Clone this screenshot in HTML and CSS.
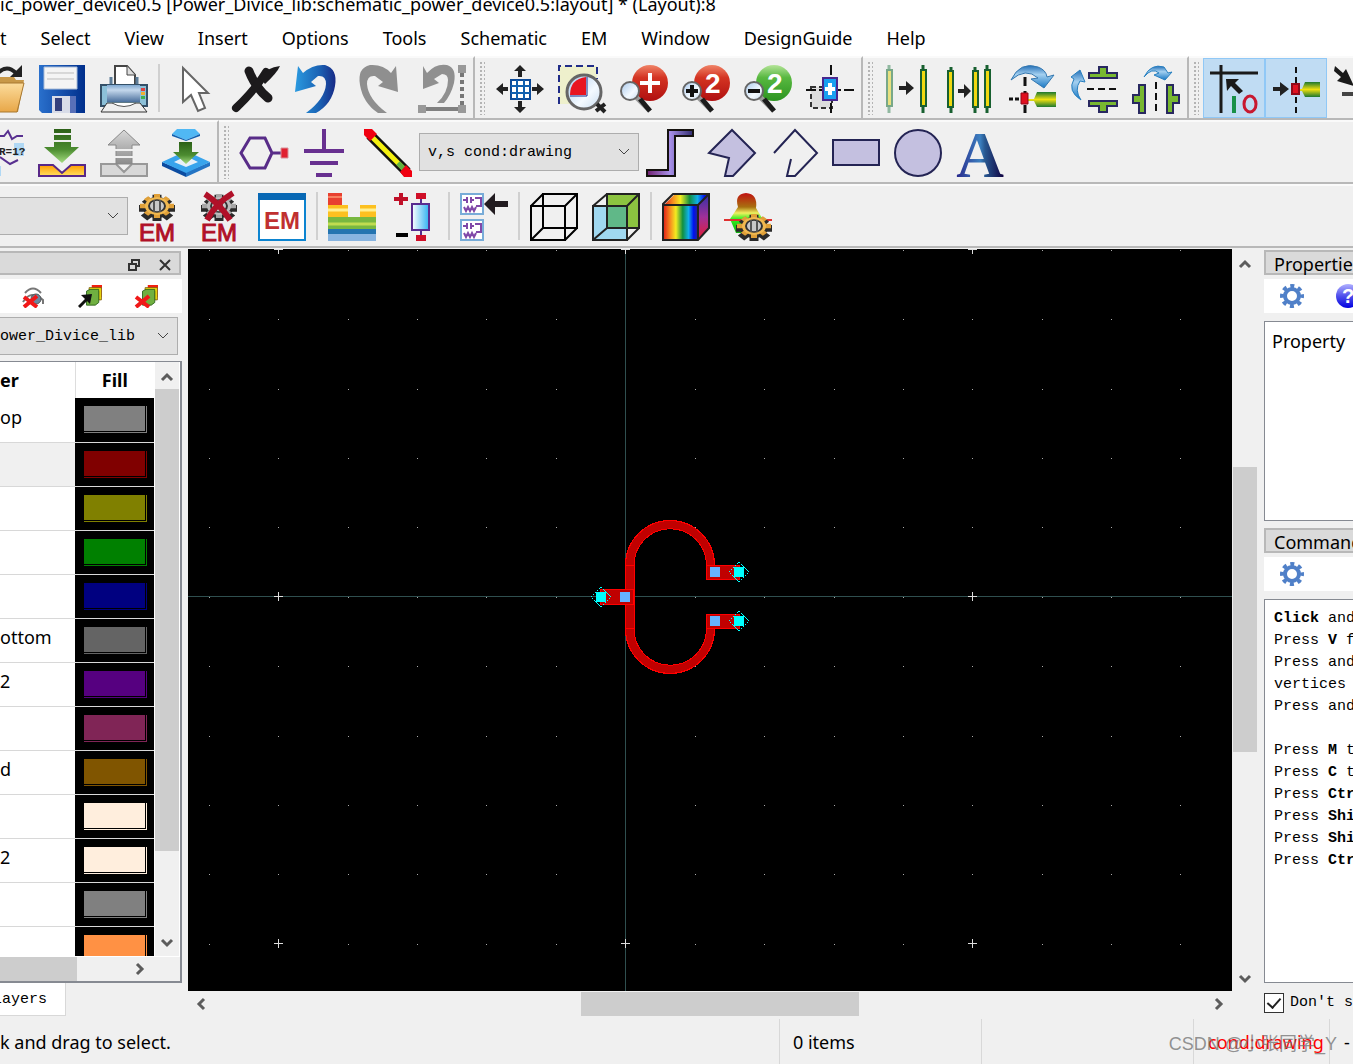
FILE: index.html
```html
<!DOCTYPE html>
<html lang="en">
  <head>
    <meta charset="utf-8" />
    <meta name="viewport" content="width=device-width, initial-scale=1" />
    <title>Layout</title>
    <link rel="stylesheet" href="styles.css">
  </head>

  <body>
    <svg class="defs" aria-hidden="true">
      <defs>
        <linearGradient id="folder" x2="0" y2="1"><stop stop-color="#fcdc9c"/><stop offset="1" stop-color="#e8a748"/></linearGradient>
        <linearGradient id="blue" x2="1"><stop stop-color="#2a9ae0"/><stop offset=".6" stop-color="#1a62b4"/><stop offset="1" stop-color="#182a86"/></linearGradient>
        <linearGradient id="disk" x2="1"><stop stop-color="#2a70cc"/><stop offset="1" stop-color="#002f8c"/></linearGradient>
        <linearGradient id="print" x2="0" y2="1"><stop stop-color="#7fa8d0"/><stop offset=".3" stop-color="#c4d8ec"/><stop offset="1" stop-color="#4a6f9c"/></linearGradient>
        <linearGradient id="red" x2="0" y2="1"><stop stop-color="#f08468"/><stop offset=".35" stop-color="#d43422"/><stop offset="1" stop-color="#b01010"/></linearGradient>
        <linearGradient id="green" x2="0" y2="1"><stop stop-color="#b4e498"/><stop offset=".35" stop-color="#58b840"/><stop offset="1" stop-color="#2c9420"/></linearGradient>
        <linearGradient id="glass" x2="1" y2="1"><stop stop-color="#a8c8ec"/><stop offset=".6" stop-color="#f4faff"/><stop offset="1" stop-color="#c8dcf0"/></linearGradient>
        <linearGradient id="sky" x2="0" y2="1"><stop stop-color="#2470b8"/><stop offset=".4" stop-color="#a4d0f0"/><stop offset="1" stop-color="#1878c4"/></linearGradient>
        <linearGradient id="port" x2="0" y2="1"><stop stop-color="#1c7830"/><stop offset=".5" stop-color="#f0e010"/><stop offset="1" stop-color="#1c7830"/></linearGradient>
        <linearGradient id="down" x2="0" y2="1"><stop stop-color="#2c6018"/><stop offset=".6" stop-color="#4c8c30"/><stop offset="1" stop-color="#a4dc80"/></linearGradient>
        <linearGradient id="up" x2="0" y2="1"><stop stop-color="#d8d8d8"/><stop offset="1" stop-color="#8c8c8c"/></linearGradient>
        <linearGradient id="tray" x2="0" y2="1"><stop stop-color="#ff9c00"/><stop offset="1" stop-color="#ffe060"/></linearGradient>
        <linearGradient id="letter" x2="1"><stop stop-color="#28288c"/><stop offset=".5" stop-color="#3c80c0"/><stop offset=".6" stop-color="#285890"/><stop offset="1" stop-color="#100040"/></linearGradient>
        <linearGradient id="trace" x2="1"><stop stop-color="#702070"/><stop offset=".5" stop-color="#a890e8"/><stop offset="1" stop-color="#302c70"/></linearGradient>
        <linearGradient id="rainbow" x2="1"><stop stop-color="#e01818"/><stop offset=".22" stop-color="#f89020"/><stop offset=".38" stop-color="#f4ec20"/><stop offset=".58" stop-color="#109040"/><stop offset=".75" stop-color="#10b0e8"/><stop offset=".9" stop-color="#0010f0"/><stop offset="1" stop-color="#2020a0"/></linearGradient>
        <linearGradient id="side" x2="0" y2="1"><stop stop-color="#3030a8"/><stop offset=".5" stop-color="#a03098"/><stop offset="1" stop-color="#e81c30"/></linearGradient>
        <linearGradient id="lobe" x2="0" y2="1"><stop stop-color="#c01010"/><stop offset=".35" stop-color="#a87010"/><stop offset=".5" stop-color="#f0f060"/><stop offset=".65" stop-color="#30f020"/><stop offset="1" stop-color="#10b010"/></linearGradient>
        <linearGradient id="ball" x2="0" y2="1"><stop stop-color="#b0b0ff"/><stop offset=".5" stop-color="#5050ec"/><stop offset="1" stop-color="#0000e0"/></linearGradient>
        <linearGradient id="tube" x2="1"><stop stop-color="#fff"/><stop offset="1" stop-color="#30b0f0"/></linearGradient>
        <symbol id="gear" viewBox="0 0 24 24">
          <g fill="none" stroke="currentColor">
            <circle cx="12" cy="12" r="7" stroke-width="4"/>
            <circle cx="12" cy="12" r="10" stroke-width="4" stroke-dasharray="4 3.85" stroke-dashoffset="2"/>
          </g>
        </symbol>
        <symbol id="cog" viewBox="0 0 38 28">
          <g transform="translate(19 13) scale(1 .75)">
            <path d="M0-15v35M-18 3h36M-12-9l25 25M12-9l-25 25" stroke="#2a2a2a" stroke-width="9"/>
            <circle r="14" cy="2" fill="#2a2a2a"/>
            <path d="M0-16v32M-17 0h34M-11-11l22 22M11-11l-22 22" stroke="#e0a038" stroke-width="6"/>
            <circle r="12" fill="#f0b850"/>
            <circle r="8" fill="#c8c8c8" stroke="#333" stroke-width="2"/>
            <path d="M-3-8v16M3-8v16" stroke="#555" stroke-width="2"/>
          </g>
        </symbol>
        <symbol id="lens" viewBox="0 0 48 48">
          <path d="M16 32l14 14" stroke="#999" stroke-width="5"/>
          <path d="M20 34l10 12" stroke="#1c1c1c" stroke-width="5"/>
          <circle cx="10" cy="26" r="9" fill="url(#glass)" stroke="#666" stroke-width="2"/>
        </symbol>
        <symbol id="stack" viewBox="0 0 24 24">
          <path d="M10 0h14v14h-3V4H10z" fill="#f02010"/>
          <path d="M7 3h14v14h-3V7H7z" fill="#f0e010" stroke="#806010"/>
          <path d="M4 7l4-2h10v15l-4 3H4z" fill="#70b040" stroke="#286018"/>
        </symbol>
        <symbol id="schem" viewBox="0 0 24 22">
          <path d="M1 1h22v20H1z" fill="#fff" stroke="#78acd8" stroke-width="2"/>
          <path d="M3 7h4M7 4v6M11 4v6M11 7h3M15 5h6v8h-5" fill="none" stroke="#8048a8" stroke-width="2"/>
          <path d="M4 14l2 4 2-4 2 4 2-4 2 4 2-4" fill="none" stroke="#8048a8" stroke-width="2"/>
        </symbol>
        <symbol id="cut" viewBox="0 0 24 24"><path d="M2 13l13 10M15 12L2 23" stroke="#f01818" stroke-width="4"/></symbol>
      </defs>
    </svg>

    <header class="title">ic_power_device0.5 [Power_Divice_lib:schematic_power_device0.5:layout] * (Layout):8</header>

    <nav class="menu">
      <a href="#">t</a>
      <a href="#">Select</a>
      <a href="#">View</a>
      <a href="#">Insert</a>
      <a href="#">Options</a>
      <a href="#">Tools</a>
      <a href="#">Schematic</a>
      <a href="#">EM</a>
      <a href="#">Window</a>
      <a href="#">DesignGuide</a>
      <a href="#">Help</a>
    </nav>

    <!-- file, edit, zoom -->
    <div class="row">
      <div class="bar clipped">
        <button class="tool" aria-label="Open"><svg viewBox="0 0 48 48"><path d="M2 12h36l2 3h8l-6 32H4z" fill="#c89848"/><path d="M2 18h46l-7 29H4z" fill="url(#folder)" stroke="#a87830"/><path d="M22 8q9-9 18 0" fill="none" stroke="#222" stroke-width="4"/><path d="M46 0v12H34z" fill="#222"/></svg></button>
        <button class="tool" aria-label="Save"><svg viewBox="0 0 48 48"><path d="M1 0h46v48H4l-3-3z" fill="url(#disk)"/><path d="M6 2h33v22H6z" fill="#f4f4f4" stroke="#a8bcd8"/><path d="M9 8h27M9 14h27" stroke="#bbb"/><path d="M14 31h24v17H14z" fill="#d8dce8"/><path d="M17 33h7v13h-7z" fill="#34407c"/><path d="M32 31h6v17h-6z" fill="#5870b8"/></svg></button>
        <button class="tool" aria-label="Print"><svg viewBox="0 0 48 48"><path d="M15 22V1h12l8 9v12" fill="#fff" stroke="#444" stroke-width="2"/><path d="M27 1v9h8" fill="#ddd" stroke="#444"/><path d="M11 12v9m26-9v9" stroke="#5c7c98" stroke-width="3"/><path d="M1 20h46v21H1z" fill="#8cc0d8" stroke="#345068" stroke-width="2"/><path d="M7 20h33v17H7z" fill="url(#print)"/><path d="M7 38h33l7 9H1z" fill="#eee" stroke="#333"/><path d="M12 38q12 7 24 0" fill="#fff" stroke="#555"/><path d="M41 23h4v3h-4z" fill="#e04040"/><path d="M41 27h4v3h-4z" fill="#f0b030"/><path d="M41 31h4v3h-4z" fill="#40b050"/></svg></button>
        <span class="sep"></span>
        <button class="tool" aria-label="Pointer"><svg viewBox="0 0 48 48"><path d="M13 3v34l8-7 7 16 7-3-6-15h9z" fill="#fff" stroke="#666" stroke-width="2"/></svg></button>
        <button class="tool" aria-label="Delete"><svg viewBox="0 0 48 48"><path d="M17 6q6 16 19 27" fill="none" stroke="#1c1a1c" stroke-width="9" stroke-linecap="round"/><path d="M4 43Q23 25 34 7" fill="none" stroke="#1c1a1c" stroke-width="8" stroke-linecap="round"/><path d="M28 13Q35 2 48 1q-3 7-15 18z" fill="#1c1a1c"/></svg></button>
        <button class="tool" aria-label="Undo"><svg viewBox="0 0 48 48"><path d="M4 1l5 7Q19-1 31 0q13 4 10 21-3 18-19 27H12q19-14 20-29 0-9-8-8l-7 6 5 4L1 27z" fill="url(#blue)"/></svg></button>
        <button class="tool" aria-label="Redo"><svg viewBox="0 0 48 48"><path d="M40 1l-5 7Q27-1 14 0 1 3 4 20q3 18 18 28h9Q12 34 11 19q0-9 8-8l8 6-5 4 20 6z" fill="#8f8f8f"/></svg></button>
        <button class="tool" aria-label="Undo segment"><svg viewBox="0 0 48 48"><path d="M5 1l4 7Q18-2 29 0q10 3 7 18-3 12-10 20h-7q11-10 11-23 0-6-6-6l-8 5 5 4L5 24z" fill="#909090"/><path d="M5 44h35" stroke="#808080" stroke-width="4"/><path d="M44 8v32" stroke="#777" stroke-width="4" stroke-dasharray="4 3"/><path d="M0 40h8v8H0zM40 40h8v8h-8zM40 0h8v8h-8z" fill="#999"/></svg></button>
      </div>
      <div class="bar">
        <span class="grip"></span>
        <button class="tool" aria-label="View all"><svg viewBox="0 0 48 48"><path d="M24 0l6 6h-4v6h-4V6h-4zM24 48l6-6h-4v-6h-4v6h-4zM0 24l7-6v4h5v4H7v4zM48 24l-7-6v4h-5v4h5v4z" fill="#222"/><path d="M15 15h19v19H15z" fill="#fff" stroke="#0c4a98" stroke-width="2"/><path d="M21 15v19M28 15v19M15 21h19M15 28h19" stroke="#1060b0" stroke-width="2"/></svg></button>
        <button class="tool" aria-label="Zoom to area"><svg viewBox="0 0 48 48"><path d="M1 1h38v38H1z" fill="#eef0cc"/><path d="M1 39V1h38v13" fill="none" stroke="#202c88" stroke-width="2" stroke-dasharray="7 4"/><circle cx="26" cy="27" r="17" fill="url(#glass)" stroke="#666" stroke-width="3"/><path d="M28 12v18H12Q12 14 28 12z" fill="#e81420"/><path d="M29 12v19M12 31h17" stroke="#182888" stroke-width="1"/><path d="M39 39l8 8M38 46l9-7" stroke="#222" stroke-width="4"/></svg></button>
        <button class="tool" aria-label="Zoom in"><svg viewBox="0 0 48 48"><circle cx="30" cy="18" r="18" fill="url(#red)"/><path d="M28 8h4v8h8v4h-8v8h-4v-8h-8v-4h8z" fill="#fff"/><use href="#lens"/></svg></button>
        <button class="tool" aria-label="Zoom in by 2"><svg viewBox="0 0 48 48"><circle cx="30" cy="18" r="18" fill="url(#red)"/><text class="two" x="23" y="28">2</text><use href="#lens"/><path d="M10 20v12M4 26h12" stroke="#111" stroke-width="4"/></svg></button>
        <button class="tool" aria-label="Zoom out by 2"><svg viewBox="0 0 48 48"><circle cx="30" cy="18" r="18" fill="url(#green)"/><text class="two" x="23" y="28">2</text><use href="#lens"/><path d="M4 26h12" stroke="#111" stroke-width="4"/></svg></button>
        <button class="tool" aria-label="Center view"><svg viewBox="0 0 48 48"><path d="M5 22h21v21H5z" fill="#ddd" stroke="#333" stroke-width="2" stroke-dasharray="5 3"/><path d="M25 0v48M0 25h48" stroke="#111" stroke-width="2" stroke-dasharray="10 3 3 3"/><path d="M17 13h14v22H17z" fill="#18a0f0" stroke="#482890" stroke-width="2"/><path d="M24 18v12M19 24h10" stroke="#fff" stroke-width="4"/></svg></button>
      </div>
      <div class="bar">
        <span class="grip"></span>
        <button class="tool" aria-label="Move"><svg viewBox="0 0 48 48"><path d="M5 0v48" stroke="#90b8a0" stroke-width="3"/><path d="M3 5h5v36H3z" fill="#e8e080" stroke="#78a888" stroke-width="2"/><path d="M39 0v48" stroke="#186030" stroke-width="3"/><path d="M37 5h5v36h-5z" fill="#f0d810" stroke="#186030" stroke-width="2"/><path d="M15 21h7v-5l8 7-8 7v-5h-7z" fill="#222"/></svg></button>
        <button class="tool" aria-label="Copy"><svg viewBox="0 0 48 48"><path d="M5 2v46M29 2v46M41 0v48" stroke="#186030" stroke-width="3"/><path d="M2 6h5v36H2zM27 6h5v36h-5zM39 5h5v37h-5z" fill="#f0d810" stroke="#186030" stroke-width="2"/><path d="M12 24h6v-5l7 7-7 7v-5h-6z" fill="#222"/></svg></button>
        <button class="tool" aria-label="Rotate"><svg viewBox="0 0 48 48"><path d="M3 15Q12-4 30 2q8 3 9 10l7-2-10 13-13-9 7-1Q18 2 3 15z" fill="url(#sky)" stroke="#3478b0"/><path d="M17 12v36" stroke="#111" stroke-width="3" stroke-dasharray="9 5"/><path d="M1 34h10" stroke="#111" stroke-width="3" stroke-dasharray="4 2"/><path d="M20 34h6l3-7h19v15H29l-3-6h-6z" fill="url(#port)"/><path d="M13 28h7v11h-7z" fill="#e01020" stroke="#900818"/></svg></button>
        <button class="tool" aria-label="Mirror about X"><svg viewBox="0 0 48 48"><path d="M19 8h10V2h8v6h10v5H19zM19 36h28v5H37v6h-8v-6H19z" fill="#78b830" stroke="#282860" stroke-width="2"/><path d="M17 24h31" stroke="#111" stroke-width="2" stroke-dasharray="7 4"/><path d="M11 35Q-3 26 4 14L1 12l9-7 5 12-5-1Q4 25 11 35z" fill="url(#sky)" stroke="#2880c0"/></svg></button>
        <button class="tool" aria-label="Mirror about Y"><svg viewBox="0 0 48 48"><path d="M7 20h6v28H7V38H1v-8h6zM35 20h6v10h6v8h-6v10h-6z" fill="#78b830" stroke="#282860" stroke-width="2"/><path d="M24 17v31" stroke="#111" stroke-width="2" stroke-dasharray="7 4"/><path d="M12 12Q19-2 32 2l4 6 4-1-7 8-11-5 5-2Q20 2 12 12z" fill="url(#sky)" stroke="#2880c0"/></svg></button>
      </div>
      <div class="bar open">
        <span class="grip"></span>
        <button class="tool on" aria-label="Insert origin"><svg viewBox="0 0 48 48"><path d="M11 0v48M0 8h48" stroke="#1a1a1a" stroke-width="3"/><path d="M16 14h13l-4 4 8 8-4 3-8-8-4 5z" fill="#1a1a1a"/><path d="M24 31v17" stroke="#189048" stroke-width="4"/><ellipse cx="40" cy="39" rx="6" ry="8" fill="none" stroke="#c81830" stroke-width="3"/></svg></button>
        <button class="tool on" aria-label="Snap to pin"><svg viewBox="0 0 48 48"><path d="M24 2v46" stroke="#111" stroke-width="2" stroke-dasharray="6 4"/><path d="M1 22h7v-5l9 7-9 7v-5H1z" fill="#222"/><path d="M27 24h3l3-7h15v15H33l-3-6h-3z" fill="url(#port)"/><path d="M20 19h7v10h-7z" fill="#e01020" stroke="#900818" stroke-width="2"/></svg></button>
        <button class="tool" aria-label="Snap to vertex"><svg viewBox="0 0 48 48"><path d="M1 1l8 7 3-4 8 17-17-5 4-4-7-6z" fill="#1a1a1a"/><path d="M8 29h40" stroke="#444" stroke-width="4"/></svg></button>
      </div>
    </div>

    <!-- ports, shapes -->
    <div class="row">
      <div class="bar clipped">
        <button class="tool" aria-label="Variables"><svg viewBox="0 0 48 48"><path d="M24 7h4l4-5 4 8 5-3h6M24 28l10 7 8-4" fill="none" stroke="#583090" stroke-width="2"/><path d="M38 14h10v13H38zM10 37h15v10H10z" fill="#b0d8f4"/><text class="var" x="23" y="26">R=1?</text></svg></button>
        <button class="tool" aria-label="Import"><svg viewBox="0 0 48 48"><path d="M1 36h14l9 8 9-8h14v11H1z" fill="url(#tray)" stroke="#582888" stroke-width="2"/><path d="M16 0h17v18h8L24 34 6 18h10z" fill="url(#down)"/><path d="M15 5h19M15 12h19" stroke="#efefef" stroke-width="2"/></svg></button>
        <button class="tool" aria-label="Export"><svg viewBox="0 0 48 48"><path d="M1 35h15l8 8 8-8h15v12H1z" fill="#d8d8d8" stroke="#999" stroke-width="2"/><path d="M24 1l16 15h-8v19H16V16H8z" fill="url(#up)" stroke="#888"/><path d="M15 21h18M15 28h18" stroke="#efefef" stroke-width="2"/></svg></button>
        <button class="tool" aria-label="Push into"><svg viewBox="0 0 48 48"><path d="M0 33l24 10v5L0 37z" fill="#0c4ca0"/><path d="M48 33L24 43v5l24-11z" fill="#2474c4"/><path d="M0 33l24-11 24 11-24 11z" fill="#38a4ec"/><path d="M12 33l12-6 12 6-12 5z" fill="#e8f0f8"/><path d="M10 5l5-5h18l5 5-14 6z" fill="#50b8f4"/><path d="M10 5l14 6 14-6v2l-14 5L10 7z" fill="#1060b0"/><path d="M17 13h13v10h7L24 35 11 23h6z" fill="url(#down)"/></svg></button>
      </div>
      <div class="bar open">
        <span class="grip"></span>
        <button class="tool" aria-label="Pin"><svg viewBox="0 0 48 48"><path d="M1 24L10 9h15l7 15-7 15H10zM32 24h10" fill="none" stroke="#582c88" stroke-width="3"/><path d="M41 19h7v10h-7z" fill="#e02030" stroke="#d89098"/></svg></button>
        <button class="tool" aria-label="Ground"><svg viewBox="0 0 48 48"><path d="M22 0v22M2 22h40M8 34h28M14 46h16" stroke="#683090" stroke-width="4"/></svg></button>
        <button class="tool" aria-label="Wire"><svg viewBox="0 0 48 48"><path d="M6 6l37 37" stroke="#111" stroke-width="10"/><path d="M7 7l35 35" stroke="#f4f010" stroke-width="5"/><path d="M34 34l7 7" stroke="#60b040" stroke-width="5"/><path d="M0 0h8l5 5-7 7-6-6zM42 36l6 6v6h-8l-4-5z" fill="#f00010"/></svg></button>
        <select class="layer" aria-label="Active layer"><option>v,s cond:drawing</option></select>
        <button class="tool" aria-label="Trace"><svg viewBox="0 0 48 48"><path d="M1 41h21V1h25v6H29v40H1z" fill="url(#trace)" stroke="#15120f" stroke-width="2"/></svg></button>
        <button class="tool" aria-label="Polygon"><svg viewBox="0 0 48 48"><path d="M24 1l23 23-22 23h-8l4-18L1 24z" fill="#c4c0e0" stroke="#242454" stroke-width="2"/></svg></button>
        <button class="tool" aria-label="Polyline"><svg viewBox="0 0 48 48"><path d="M4 24L25 1l22 23-22 23h-8l4-17" fill="none" stroke="#242454" stroke-width="2"/></svg></button>
        <button class="tool" aria-label="Rectangle"><svg viewBox="0 0 48 48"><path d="M1 11h46v25H1z" fill="#c4c0e0" stroke="#242454" stroke-width="2"/></svg></button>
        <button class="tool" aria-label="Circle"><svg viewBox="0 0 48 48"><circle cx="24" cy="24" r="23" fill="#c4c0e0" stroke="#242454" stroke-width="2"/></svg></button>
        <button class="tool" aria-label="Text"><svg viewBox="0 0 48 48"><text class="letter" x="24" y="48" fill="url(#letter)">A</text></svg></button>
      </div>
    </div>

    <!-- EM simulation, 3D views -->
    <div class="row">
      <div class="bar open">
        <select class="setup" aria-label="EM setup"><option></option></select>
        <button class="tool" aria-label="EM settings"><svg viewBox="0 0 48 48"><use href="#cog" x="4" y="0" width="38" height="28"/><text class="em" x="23" y="48">EM</text></svg></button>
        <button class="tool" aria-label="Stop EM"><svg viewBox="0 0 48 48"><use class="gray" href="#cog" x="4" y="0" width="38" height="28"/><path d="M9 1q14 9 25 26M37 0Q20 10 11 27" fill="none" stroke="#b01028" stroke-width="6"/><text class="em" x="23" y="48">EM</text></svg></button>
        <button class="tool" aria-label="EM window"><svg viewBox="0 0 48 48"><path d="M1 1h46v46H1z" fill="#fff" stroke="#0c84d0" stroke-width="2"/><path d="M0 0h48v7H0z" fill="#0868b4"/><text class="em bold" x="24" y="36">EM</text></svg></button>
        <span class="sep"></span>
        <button class="tool" aria-label="Substrate"><svg viewBox="0 0 48 48"><path d="M0 0h14v12H0z" fill="#e84030"/><path d="M0 4h14" stroke="#f88060" stroke-width="2"/><path d="M0 12h20v12H0zM32 12h16v12H32z" fill="#fcc020"/><path d="M0 17h20M32 17h16" stroke="#fff090" stroke-width="3"/><path d="M0 24h48v12H0z" fill="#78b840"/><path d="M0 31h48" stroke="#c0dc50" stroke-width="3"/><path d="M0 36h48v6H0z" fill="#2474b0"/><path d="M0 41h48v7H0z" fill="#88b4e0"/></svg></button>
        <button class="tool" aria-label="Ports"><svg viewBox="0 0 48 48"><path d="M4 6h14M11 0v12" stroke="#c01028" stroke-width="4"/><path d="M6 42h12" stroke="#000" stroke-width="4"/><path d="M31 5v38" stroke="#582c90" stroke-width="2"/><path d="M22 11h17v26H22z" fill="url(#tube)" stroke="#582c90" stroke-width="2"/><path d="M26 0h10v6H26zM26 42h10v6H26z" fill="#d01028"/></svg></button>
        <span class="sep"></span>
        <button class="tool" aria-label="Component"><svg viewBox="0 0 48 48"><use href="#schem" width="24" height="22"/><use href="#schem" y="26" width="24" height="22"/><path d="M24 11L35 0v8h13v6H35v8z" fill="#221c20"/></svg></button>
        <span class="sep"></span>
        <button class="tool" aria-label="Wireframe"><svg viewBox="0 0 48 48"><path d="M1 13h34v34H1zM13 1h34v34H13zM1 13L13 1M35 13L47 1M35 47l12-12M1 47l12-12" fill="none" stroke="#000" stroke-width="2"/></svg></button>
        <button class="tool" aria-label="3D view"><svg viewBox="0 0 48 48"><path d="M15 1h32v34H15z" fill="#8cc440"/><path d="M1 13h34v34H1z" fill="#a0d8f0"/><path d="M15 13h20v22H15z" fill="#60b888"/><path d="M1 13h34v34H1zM15 1h32v34H15zM1 13L15 1M35 13L47 1M35 47l12-12M1 47l14-12" fill="none" stroke="#222" stroke-width="2"/></svg></button>
        <span class="sep"></span>
        <button class="tool" aria-label="Color cube"><svg viewBox="0 0 48 48"><path d="M1 13L13 1h34L35 13z" fill="url(#rainbow)"/><path d="M1 13h34v34H1z" fill="url(#rainbow)"/><path d="M35 13L47 1v34L35 47z" fill="url(#side)"/><path d="M1 11L11 1h36v34L36 47H1zM1 12h35v35M36 12L47 1" fill="none" stroke="#222" stroke-width="2"/></svg></button>
        <button class="tool" aria-label="Far field"><svg viewBox="0 0 48 48"><path d="M22 0q12 1 10 15l6 10-12 15H12L6 26l8-12Q10 1 22 0z" fill="url(#lobe)"/><path d="M0 27h48" stroke="#e03030" stroke-width="2"/><use href="#cog" x="11" y="20" width="38" height="28"/></svg></button>
      </div>
    </div>

    <main>
      <aside class="layers">
        <div class="caption">
          <button aria-label="Float"><svg width="14" height="14" viewBox="0 0 14 14"><path d="M5 5V2h7v6H9M2 6h7v6H2z" fill="none" stroke="#333" stroke-width="2"/></svg></button>
          <button aria-label="Close"><svg width="12" height="12" viewBox="0 0 12 12"><path d="M1 1l10 10M11 1L1 11" stroke="#333" stroke-width="2"/></svg></button>
        </div>
        <div class="strip">
          <button aria-label="Hide all"><svg width="24" height="24" viewBox="0 0 24 24"><path d="M3 9q8-9 16 0M1 18q8-13 20-2v4" fill="none" stroke="#777" stroke-width="2"/><circle cx="14" cy="15" r="5" fill="#6888a0" stroke="#555"/><use href="#cut"/></svg></button>
          <button aria-label="Select layers"><svg width="24" height="24" viewBox="0 0 24 24"><use href="#stack" x="5" width="21" height="23"/><path d="M1 23l8-8" stroke="#111" stroke-width="3"/><path d="M14 10l-2 10-3-3-5-5-1-1z" fill="#111"/></svg></button>
          <button aria-label="Remove layers"><svg width="24" height="24" viewBox="0 0 24 24"><use href="#stack" x="5" width="21" height="23"/><use href="#cut"/></svg></button>
        </div>
        <select class="library" aria-label="Library"><option>ower_Divice_lib</option></select>
        <div class="frame">
          <div class="grid">
            <table>
              <thead><tr><th>er</th><th>Fill</th></tr></thead>
              <tbody>
                <tr><td>op</td><td><i class="fill gray1"></i></td></tr>
                <tr class="active"><td></td><td><i class="fill maroon"></i></td></tr>
                <tr><td></td><td><i class="fill olive"></i></td></tr>
                <tr><td></td><td><i class="fill green"></i></td></tr>
                <tr><td></td><td><i class="fill navy"></i></td></tr>
                <tr><td>ottom</td><td><i class="fill gray2"></i></td></tr>
                <tr><td>2</td><td><i class="fill indigo"></i></td></tr>
                <tr><td></td><td><i class="fill plum"></i></td></tr>
                <tr><td>d</td><td><i class="fill brown"></i></td></tr>
                <tr><td></td><td><i class="fill cream"></i></td></tr>
                <tr><td>2</td><td><i class="fill cream"></i></td></tr>
                <tr><td></td><td><i class="fill gray1"></i></td></tr>
                <tr><td></td><td><i class="fill orange"></i></td></tr>
              </tbody>
            </table>
            <div class="scroll down">
              <svg width="24" height="24" viewBox="0 0 24 24"><path d="M7 18l5-5 5 5" /></svg>
              <div class="track"><i class="thumb layers-v"></i></div>
              <svg width="24" height="24" viewBox="0 0 24 24"><path d="M7 8l5 5 5-5" /></svg>
            </div>
          </div>
          <div class="scroll across">
            <div class="track"><i class="thumb layers-h"></i></div>
            <svg width="24" height="24" viewBox="0 0 24 24"><path d="M9 7l5 5-5 5" /></svg>
          </div>
        </div>
        <button class="tab">Layers</button>
      </aside>

      <section class="view">
        <div class="stage">
          <svg class="canvas" shape-rendering="crispEdges">
            <defs>
              <path id="dots" d="M21 0h1M90 0h1M160 0h1M229 0h1M298 0h1M368 0h1M437 0h1M507 0h1M576 0h1M646 0h1M715 0h1M784 0h1M854 0h1M923 0h1M992 0h1" stroke="#aaa"/>
              <path id="cross" d="M-4 0h9M.5-4.5v9" stroke="#ddd"/>
              <path id="pin" d="M0-10L10 0 0 10-10 0z" fill="none" stroke="#0ff" stroke-dasharray="2 1"/>
            </defs>
            <g transform="translate(0 .5)">
              <use href="#dots" y="1"/><use href="#dots" y="70"/><use href="#dots" y="140"/><use href="#dots" y="209"/><use href="#dots" y="278"/><use href="#dots" y="348"/><use href="#dots" y="417"/><use href="#dots" y="487"/><use href="#dots" y="556"/><use href="#dots" y="625"/><use href="#dots" y="695"/>
            </g>
            <path d="M437.500 0v2000M0 347.500h4000" stroke="#2f4f4f"/>
            <g transform="translate(0 .5)">
              <use href="#cross" x="90"/><use href="#cross" x="437"/><use href="#cross" x="784"/>
              <use href="#cross" x="90" y="347"/><use href="#cross" x="784" y="347"/>
              <use href="#cross" x="90" y="694"/><use href="#cross" x="437" y="694"/><use href="#cross" x="784" y="694"/>
            </g>
            <g fill="#c00000" stroke="#f00">
              <path d="M437.500 316a44.500 44.500 0 0 1 89 0v14h-8v-14a36 36 0 0 0-72.500 0v64a36 36 0 0 0 72.500 0v-14h8v14a44.500 44.500 0 0 1-89 0z"/>
              <path d="M412.500 340.500h33v15h-33zM518.500 316.500h33v14h-33zM518.500 365.500h33v14h-33z"/>
              <path d="M437.500 316.500h8M437.500 379.500h8" fill="none"/>
            </g>
            <path d="M408 343h10v10h-10zM546 318h10v10h-10zM546 367h10v10h-10z" fill="#0ff"/>
            <path d="M432 343h10v10h-10zM522 318h10v10h-10zM522 367h10v10h-10z" fill="#66b3ff"/>
            <use href="#pin" x="413" y="348"/><use href="#pin" x="551" y="323"/><use href="#pin" x="551" y="372"/>
          </svg>
          <div class="scroll down">
            <svg width="24" height="24" viewBox="0 0 24 24"><path d="M7 18l5-5 5 5" /></svg>
            <div class="track"><i class="thumb view-v"></i></div>
            <svg width="24" height="24" viewBox="0 0 24 24"><path d="M7 9l5 5 5-5" /></svg>
          </div>
        </div>
        <div class="scroll across">
          <svg width="24" height="24" viewBox="0 0 24 24"><path d="M16 7l-5 5 5 5" /></svg>
          <div class="track"><i class="thumb view-h"></i></div>
          <svg width="24" height="24" viewBox="0 0 24 24"><path d="M8 7l5 5-5 5" /></svg>
        </div>
      </section>

      <aside class="side">
        <h2>Properties</h2>
        <div class="strip">
          <button aria-label="Property settings"><svg width="24" height="24"><use href="#gear"/></svg></button>
          <button aria-label="Help"><svg width="24" height="24" viewBox="0 0 24 24"><circle cx="12" cy="12" r="12" fill="url(#ball)"/><text class="ask" x="12" y="19">?</text></svg></button>
        </div>
        <div class="props">Property</div>
        <h2>Command</h2>
        <div class="strip">
          <button aria-label="Command settings"><svg width="24" height="24"><use href="#gear"/></svg></button>
        </div>
        <div class="help">
          <p><b>Click</b> and</p>
          <p>Press <b>V</b> f</p>
          <p>Press and</p>
          <p>vertices</p>
          <p>Press and</p>
          <p>&nbsp;</p>
          <p>Press <b>M</b> t</p>
          <p>Press <b>C</b> t</p>
          <p>Press <b>Ctr</b></p>
          <p>Press <b>Shi</b></p>
          <p>Press <b>Shi</b></p>
          <p>Press <b>Ctr</b></p>
        </div>
        <label class="check"><input type="checkbox" checked>Don't s</label>
      </aside>
    </main>

    <footer>
      <span class="hint">k and drag to select.</span>
      <span class="items">0 items</span>
      <span class="blank"></span>
      <span class="current">cond:drawing</span>
      <span class="coord">-</span>
      <span class="mark">CSDN @小张同学_Y</span>
    </footer>
  </body>
</html>
```
FILE: styles.css
```css
* {
    box-sizing: border-box;
}
body {
    margin: 0;
    height: 100vh;
    display: flex;
    flex-direction: column;
    overflow: hidden;
    background: #f0f0f0;
    color: #000;
    font: 18px/24px "Noto Sans", "Open Sans", sans-serif;
}
button {
    border: 0;
    padding: 0;
    background: none;
    font: inherit;
    color: inherit;
}
svg {
    display: block;
    flex: none;
}
.defs {
    position: absolute;
    width: 0;
    height: 0;
}

.title {
    height: 22px;
    line-height: 8px;
    background: #fff;
    white-space: nowrap;
}
.menu {
    display: flex;
    gap: 34px;
    height: 34px;
    line-height: 32px;
    background: #fff;
}
.menu a {
    color: #000;
    text-decoration: none;
}

/* toolbars */
.row {
    display: flex;
    height: 64px;
    overflow: hidden;
    flex: none;
}
.bar {
    display: flex;
    align-items: center;
    flex: none;
    height: 64px;
    border-top: 2px solid #fafafa;
    border-right: 2px solid #b8b8b8;
    border-bottom: 2px solid #b8b8b8;
}
.bar.clipped {
    margin-left: -31px;
}
.bar.open {
    flex: 1 0 auto;
    border-right: 0;
}
.tool {
    width: 62px;
    height: 60px;
    padding: 6px;
    border: 1px solid transparent;
    flex: none;
}
.tool svg {
    width: 48px;
    height: 48px;
    overflow: visible;
}
.tool.on {
    background: #c0dcf3;
    border-color: #90c8f6;
}
.sep {
    width: 2px;
    height: 48px;
    margin: 0 3px;
    background: #d0d0d0;
}
.grip {
    width: 6px;
    height: 54px;
    margin: 0 4px;
    background: radial-gradient(circle, #b4b4b4 1px, transparent 1px) 0 0 / 4px 4px;
}
.two {
    font: bold 28px "Liberation Sans", sans-serif;
    fill: #fff;
}
.var {
    font: bold 11px "Liberation Mono", monospace;
    fill: #222;
}
.letter {
    font: bold 66px "Liberation Serif", serif;
    text-anchor: middle;
}
.em {
    font: 24px "Liberation Sans", sans-serif;
    text-anchor: middle;
    fill: #b01028;
    stroke: #b01028;
    stroke-width: 1px;
}
.em.bold {
    font-weight: bold;
    fill: #c03030;
    stroke: none;
}
.gray {
    filter: grayscale(1);
}
.ask {
    font: bold 20px "Liberation Sans", sans-serif;
    text-anchor: middle;
    fill: #fff;
}

select {
    appearance: none;
    height: 38px;
    padding: 0 8px;
    border: 1px solid #adadad;
    border-radius: 0;
    background: #e1e1e1 url("data:image/svg+xml,%3Csvg xmlns='http://www.w3.org/2000/svg' width='12' height='8'%3E%3Cpath d='M1 1l5 5 5-5' fill='none' stroke='%23444'/%3E%3C/svg%3E") no-repeat right 8px center;
    color: #000;
    font: 15px "Liberation Mono", monospace;
}
.layer {
    width: 220px;
}
.setup {
    width: 128px;
    margin-right: -1px;
    border-left: 0;
}

main {
    display: flex;
    flex: 1;
    min-height: 0;
    padding: 1px 0 3px;
}
.strip {
    display: flex;
    align-items: center;
    height: 34px;
    background: #fff;
    flex: none;
}
.layers {
    display: flex;
    flex-direction: column;
    width: 182px;
    margin-right: 6px;
    flex: none;
}
.caption {
    display: flex;
    justify-content: flex-end;
    align-items: center;
    gap: 18px;
    height: 24px;
    margin: 2px 1px 4px 0;
    padding: 4px 8px 0 0;
    border: 2px solid #b8b8b8;
    border-left: 0;
    background: #dadada;
    flex: none;
}
.layers .strip {
    justify-content: flex-end;
    gap: 32px;
    padding-right: 24px;
}
.library {
    width: 178px;
    margin: 4px 0 6px;
    padding: 0;
    border-left: 0;
    flex: none;
}
.frame {
    display: flex;
    flex-direction: column;
    flex: 1;
    min-height: 0;
    border: 2px solid #868a92;
    border-left: 0;
    border-top-width: 1px;
    background: #fff;
}
.grid {
    display: flex;
    flex: 1;
    min-height: 0;
    overflow: hidden;
}
.grid table {
    width: 154px;
    height: 100px;
    border-collapse: collapse;
    table-layout: fixed;
}
.grid th {
    height: 36px;
    padding: 0;
    border-right: 1px solid #ddd;
    text-align: left;
}
.grid th + th {
    width: 79px;
    border-right: 0;
    text-align: center;
}
.grid td {
    height: 44px;
    padding: 0 0 6px;
    border-bottom: 1px solid #d8d8d8;
    line-height: 22px;
}
.grid td + td {
    padding: 0;
    background: #000;
}
.active td:first-child {
    background: #f0f0f0;
}
.fill {
    display: block;
    width: 63px;
    height: 27px;
    margin-left: 9px;
    background: currentColor;
    box-shadow: inset -1px -1px currentColor, inset -2px -2px #000;
}
.gray1 { color: #808080; }
.gray2 { color: #646464; }
.maroon { color: #800000; }
.olive { color: #808000; }
.green { color: #008000; }
.navy { color: #000080; }
.indigo { color: #560080; }
.plum { color: #802556; }
.brown { color: #805500; }
.cream { color: #ffeedd; }
.orange { color: #ff9144; }

.tab {
    display: flex;
    justify-content: flex-end;
    align-items: center;
    width: 66px;
    height: 33px;
    padding-right: 18px;
    border: 1px solid #d8d8d8;
    border-width: 0 1px 1px 0;
    background: #fff;
    font: 15px "Liberation Mono", monospace;
    flex: none;
}

/* scroll bars */
.scroll {
    display: flex;
    flex: none;
    background: #f0f0f0;
}
.scroll path {
    fill: none;
    stroke: #5c5c5c;
    stroke-width: 3;
}
.scroll.down {
    flex-direction: column;
    width: 24px;
    margin-left: 1px;
}
.scroll.across {
    height: 24px;
    margin-top: 1px;
}
.track {
    flex: 1;
}
.thumb {
    display: block;
    background: #cdcdcd;
}
.down .track {
    display: flex;
    flex-direction: column;
}
.across .track {
    display: flex;
}
.frame .down .track {
    padding-top: 3px;
}
.layers-v { height: 85%; }
.layers-h { width: 60%; }
.frame > .scroll { padding-right: 28px; }
.view-v {
    height: 41%;
    margin-top: 194px;
}
.view-h {
    width: 28%;
    margin-left: 37%;
}

.view {
    display: flex;
    flex-direction: column;
    flex: 1;
    min-width: 0;
}
.stage {
    display: flex;
    flex: 1;
    min-height: 0;
}
.canvas {
    flex: 1;
    width: 100%;
    min-width: 0;
    height: 100%;
    background: #000;
}
.view > .across {
    margin-right: 25px;
}

.side {
    display: flex;
    flex-direction: column;
    width: 89px;
    margin-left: 7px;
    overflow: hidden;
    white-space: nowrap;
    flex: none;
}
.side h2 {
    margin: 1px 0 4px;
    height: 25px;
    padding-left: 8px;
    border: 2px solid #b8b8b8;
    border-right: 0;
    background: #dadada;
    font-size: 18px;
    line-height: 24px;
    font-weight: normal;
    flex: none;
}
.side .strip {
    gap: 32px;
    padding-left: 16px;
    color: #5080c8;
}
.props {
    height: 200px;
    margin: 8px 0 6px;
    padding: 7px;
    border: 1px solid #868a92;
    border-right: 0;
    background: #fff;
}
.help {
    flex: 1;
    margin-top: 8px;
    padding: 8px 9px;
    border: 1px solid #868a92;
    border-right: 0;
    background: #fff;
    font: 15px/22px "Liberation Mono", monospace;
}
.help p {
    margin: 0;
}
.check {
    display: flex;
    align-items: center;
    gap: 6px;
    height: 33px;
    padding-top: 6px;
    font: 15px "Liberation Mono", monospace;
}
.check input {
    appearance: none;
    width: 20px;
    height: 20px;
    margin: 0;
    border: 1px solid #333;
    background: #fff;
    flex: none;
}
.check input:checked::before {
    content: "";
    display: block;
    width: 6px;
    height: 11px;
    margin: 1px auto;
    border: solid #222;
    border-width: 0 2px 2px 0;
    transform: rotate(42deg);
}

footer {
    position: relative;
    display: flex;
    height: 45px;
    line-height: 46px;
    white-space: nowrap;
    overflow: hidden;
    flex: none;
}
footer span {
    border-right: 1px solid #d8d8d8;
}
.hint {
    flex: 1;
}
.items {
    width: 202px;
    padding-left: 13px;
}
.blank {
    width: 212px;
}
.current {
    width: 136px;
    padding-left: 14px;
    color: #f00;
}
footer .coord {
    width: 23px;
    padding-left: 14px;
    border: 0;
}
footer .mark {
    position: absolute;
    right: 16px;
    top: 2px;
    border: 0;
    color: #777c;
    font-family: "Liberation Sans", "Noto Sans CJK SC", sans-serif;
}
```
